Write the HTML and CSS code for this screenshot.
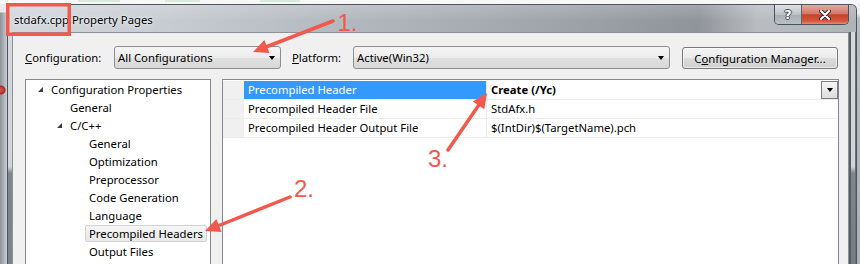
FILE: index.html
```html
<!DOCTYPE html>
<html>
<head>
<meta charset="utf-8">
<link rel="stylesheet" href="styles.css">
</head>
<body>
<div class="screen">
  <div class="behind-top"></div>
  <div class="stage">
    <div class="behind-left"></div>
    <div class="window">
      <div class="titlebar">
        <span class="title">stdafx.cpp Property Pages</span>
        <div class="caption">
          <div class="cap help">?</div>
          <div class="cap close">
            <svg width="12" height="10" viewBox="0 0 12 10"><path d="M2 1 L10 9 M10 1 L2 9" stroke="#2e2e2e" stroke-width="4" stroke-linecap="round"/><path d="M2 1 L10 9 M10 1 L2 9" stroke="#ffffff" stroke-width="2" stroke-linecap="round"/></svg>
          </div>
        </div>
      </div>
      <div class="frame-body">
        <div class="frame-left"></div>
        <div class="client">
          <div class="toolbar">
            <label class="lbl lbl-config"><u>C</u>onfiguration:</label>
            <div class="combo combo-config"><span>All Configurations</span><i class="arrow"></i></div>
            <label class="lbl lbl-platform"><u>P</u>latform:</label>
            <div class="combo combo-platform"><span>Active(Win32)</span><i class="arrow"></i></div>
            <button class="btn">C<u>o</u>nfiguration Manager...</button>
          </div>
          <div class="panels">
            <div class="tree">
              <div class="node l0"><i class="tri"></i>Configuration Properties</div>
              <div class="node l1">General</div>
              <div class="node l1"><i class="tri"></i>C/C++</div>
              <div class="node l2">General</div>
              <div class="node l2">Optimization</div>
              <div class="node l2">Preprocessor</div>
              <div class="node l2">Code Generation</div>
              <div class="node l2">Language</div>
              <div class="node l2"><span class="sel">Precompiled Headers</span></div>
              <div class="node l2">Output Files</div>
            </div>
            <div class="grid">
              <div class="row selected">
                <div class="gutter"></div>
                <div class="name">Precompiled Header</div>
                <div class="value"><b>Create (/Yc)</b><div class="cell-btn"><i class="arrow"></i></div></div>
              </div>
              <div class="row">
                <div class="gutter"></div>
                <div class="name">Precompiled Header File</div>
                <div class="value">StdAfx.h</div>
              </div>
              <div class="row">
                <div class="gutter"></div>
                <div class="name">Precompiled Header Output File</div>
                <div class="value">$(IntDir)$(TargetName).pch</div>
              </div>
            </div>
          </div>
        </div>
        <div class="frame-right"></div>
      </div>
    </div>
    <div class="behind-right"></div>
  </div>
  <svg class="annot" width="860" height="264" viewBox="0 0 860 264">
    <rect x="7.75" y="4.75" width="61.5" height="29.5" fill="none" stroke="#f2584c" stroke-width="3.5"/>
    <line x1="333" y1="21" x2="266" y2="47" stroke="#f2584c" stroke-width="3.5" stroke-linecap="round"/>
    <polygon points="253,52 269.5,53.1 264.4,40.1" fill="#f2584c"/>
    <line x1="290" y1="197" x2="219" y2="225.5" stroke="#f2584c" stroke-width="3.5" stroke-linecap="round"/>
    <polygon points="205,231 221.5,232 216.4,219" fill="#f2584c"/>
    <line x1="448" y1="150" x2="478.5" y2="105.4" stroke="#f2584c" stroke-width="3.5" stroke-linecap="round"/>
    <polygon points="487,93 484.3,109.3 472.7,101.4" fill="#f2584c"/>
    <text class="num" x="337.5" y="31">1.</text>
    <text class="num" x="294" y="197">2.</text>
    <text class="num" x="428" y="167">3.</text>
  </svg>
</div>
</body>
</html>
```

FILE: styles.css
```css
* { box-sizing: border-box; margin: 0; padding: 0; }
html, body { width: 860px; height: 264px; overflow: hidden; }
body {
  font-family: "Noto Sans", "Open Sans", sans-serif;
  font-size: 11.3px;
  color: #000;
  background: #f4f4f4;
}
.screen { position: relative; width: 860px; height: 264px; overflow: hidden; display: flex; flex-direction: column; }
.behind-top {
  height: 4px; flex: none; overflow: hidden;
  background:
    linear-gradient(to bottom, transparent 0 1px, rgba(255,255,255,0) 1px),
    linear-gradient(to right, transparent 0 78px, rgba(90,170,90,.18) 78px 120px, transparent 120px 165px, rgba(90,170,90,.18) 165px 200px, transparent 200px 260px, rgba(90,170,90,.18) 260px 300px, transparent 300px);
  background-color: #f6f7f6;
  background-size: 100% 2px, 100% 2px;
  background-repeat: no-repeat;
}
.stage { flex: 1; display: flex; }
.behind-left {
  width: 7px; flex: none;
  background:
    radial-gradient(circle at 1px 86px, #d35a52 0, #a82a26 4px, transparent 5px),
    linear-gradient(to bottom, #e9ecef 0, #e9ecef 8px, transparent 9px),
    linear-gradient(to right, #8e9398, #c9ccd0);
}
.behind-right { width: 3px; flex: none; background: linear-gradient(to bottom, #eef0f1 0 10px, #b9bec2 14px, #aab0b5); }
.window {
  width: 850px; flex: none;
  display: flex; flex-direction: column;
  border-radius: 6px 6px 0 0;
  border: 1px solid #4e555c;
  border-bottom: 0;
  overflow: hidden;
  background: #b6bbc0;
}
.titlebar {
  height: 27px; flex: none;
  display: flex; align-items: flex-start;
  background:
    linear-gradient(to bottom, rgba(255,255,255,.18), rgba(255,255,255,0) 60%),
    linear-gradient(to right, #d3d8dd 0, #c9ced4 140px, #b3b8be 340px, #a0a5ab 540px, #8f949a 690px, #b9bdc1 750px, #aeb3b8 849px);
}
.title { padding: 7px 0 0 6px; line-height: 16px; text-shadow: 0 0 6px rgba(255,255,255,.85), 0 0 2px rgba(255,255,255,.8); }
.caption {
  margin-left: auto; margin-right: 7px;
  display: flex; height: 20px;
  border: 1px solid #49525b; border-top: 0;
  border-radius: 0 0 5px 5px;
  overflow: hidden;
}
.cap { height: 19px; display: flex; align-items: center; justify-content: center; }
.help {
  width: 27px;
  background: linear-gradient(to bottom, #dfe3e7, #bcc2c8 50%, #a7aeb5 51%, #b9c0c6);
  border-right: 1px solid #5f666d;
  color: #fff; font-family: "DejaVu Sans", sans-serif; font-weight: bold; font-size: 13px;
  text-shadow: 0 0 1px #333, 1px 0 0 #555, -1px 0 0 #555, 0 1px 0 #555, 0 -1px 0 #555;
}
.close {
  width: 46px;
  background: linear-gradient(to bottom, #e7a99f, #d47a6a 45%, #c7432c 52%, #d5573f 85%, #e88e6e);
}
.frame-body { flex: 1; display: flex; min-height: 0; }
.frame-left {
  width: 4px; flex: none;
  background: linear-gradient(to bottom, #d5d9dd 0, #d0d4d8 135px, #7f868c 141px, #7a8187);
}
.frame-right {
  width: 7px; flex: none;
  background:
    linear-gradient(to right, #555c63 0 2px, transparent 2px 6px, #6a7178 6px),
    linear-gradient(to bottom, #d6d9dc 0, #cfd3d6 135px, #7f868c 141px, #767d83);
}
.client {
  flex: 1;
  background: #f0f0f0;
  border: 1px solid #8c9298;
  border-bottom: 0;
  padding: 13px 9px 0 12px;
  display: flex; flex-direction: column;
  min-width: 0;
}
.toolbar { height: 23px; display: flex; align-items: center; flex: none; }
.lbl { white-space: nowrap; }
.lbl u, .btn u { text-decoration: underline; text-underline-offset: 1px; }
.lbl-config { width: 89px; }
.lbl-platform { width: 61px; margin-left: 11px; }
.combo {
  height: 23px;
  display: flex; align-items: center; justify-content: space-between;
  padding: 0 5px 0 3px;
  border: 1px solid #8d8e8f;
  border-radius: 3px;
  background: linear-gradient(to bottom, #f5f5f5 0, #ececec 50%, #e0e0e0 51%, #d8d8d8 100%);
}
.combo-config { width: 167px; }
.combo-platform { width: 317px; }
.arrow {
  display: block; width: 0; height: 0;
  border-left: 3.5px solid transparent; border-right: 3.5px solid transparent;
  border-top: 4px solid #000;
}
.btn {
  margin-left: 12px;
  width: 156px; height: 22px;
  margin-top: 1px;
  font: inherit; color: #000;
  border: 1px solid #7a7a7a;
  border-radius: 3px;
  background: linear-gradient(to bottom, #f3f3f3 0, #ebebeb 50%, #dddddd 51%, #cfcfcf 100%);
  box-shadow: inset 0 0 0 1px rgba(255,255,255,.6);
}
.panels { margin-top: 10px; display: flex; gap: 11px; flex: 1; min-height: 0; }
.tree {
  width: 186px; flex: none;
  background: #fff;
  border: 1px solid #828790;
  border-bottom: 0;
  padding-top: 0;
}
.node { height: 18px; display: flex; align-items: center; white-space: nowrap; }
.l0 { padding-left: 25px; }
.l1 { padding-left: 44px; }
.l2 { padding-left: 63px; }
.tri {
  display: block; width: 0; height: 0;
  margin-left: -13px; margin-right: 8px; margin-top: 1px;
  border-left: 5px solid transparent;
  border-bottom: 5px solid #3a3a3a;
}
.sel {
  margin-left: -4px;
  padding: 0 3px;
  height: 17px; line-height: 15px;
  border: 1px solid #d2d2d2;
  border-radius: 2px;
  background: linear-gradient(to bottom, #f6f6f6, #e9e9e9);
}
.grid {
  flex: 1;
  background: #fff;
  border: 1px solid #828790;
  border-bottom: 0;
  padding-top: 1px;
  min-width: 0;
}
.row { height: 19px; display: flex; border-bottom: 1px solid #ececec; line-height: 17px; white-space: nowrap; }
.gutter { width: 21px; flex: none; background: #f0f0f0; }
.name { width: 242px; flex: none; padding-left: 4px; }
.selected .name { background: #3399ff; color: #fff; }
.value { flex: 1; display: flex; padding-left: 4px; border-left: 1px solid #ececec; min-width: 0; }
.value b { font-weight: 700; }
.cell-btn {
  margin-left: auto;
  width: 17px; height: 18px;
  border: 1px solid #7d7d7d;
  background: linear-gradient(to bottom, #f6f6f6, #dcdcdc);
  display: flex; align-items: center; justify-content: center;
}
.annot { position: absolute; left: 0; top: 0; pointer-events: none; }
.num { font-family: "Liberation Sans", sans-serif; font-size: 24px; fill: #f2584c; }
```
